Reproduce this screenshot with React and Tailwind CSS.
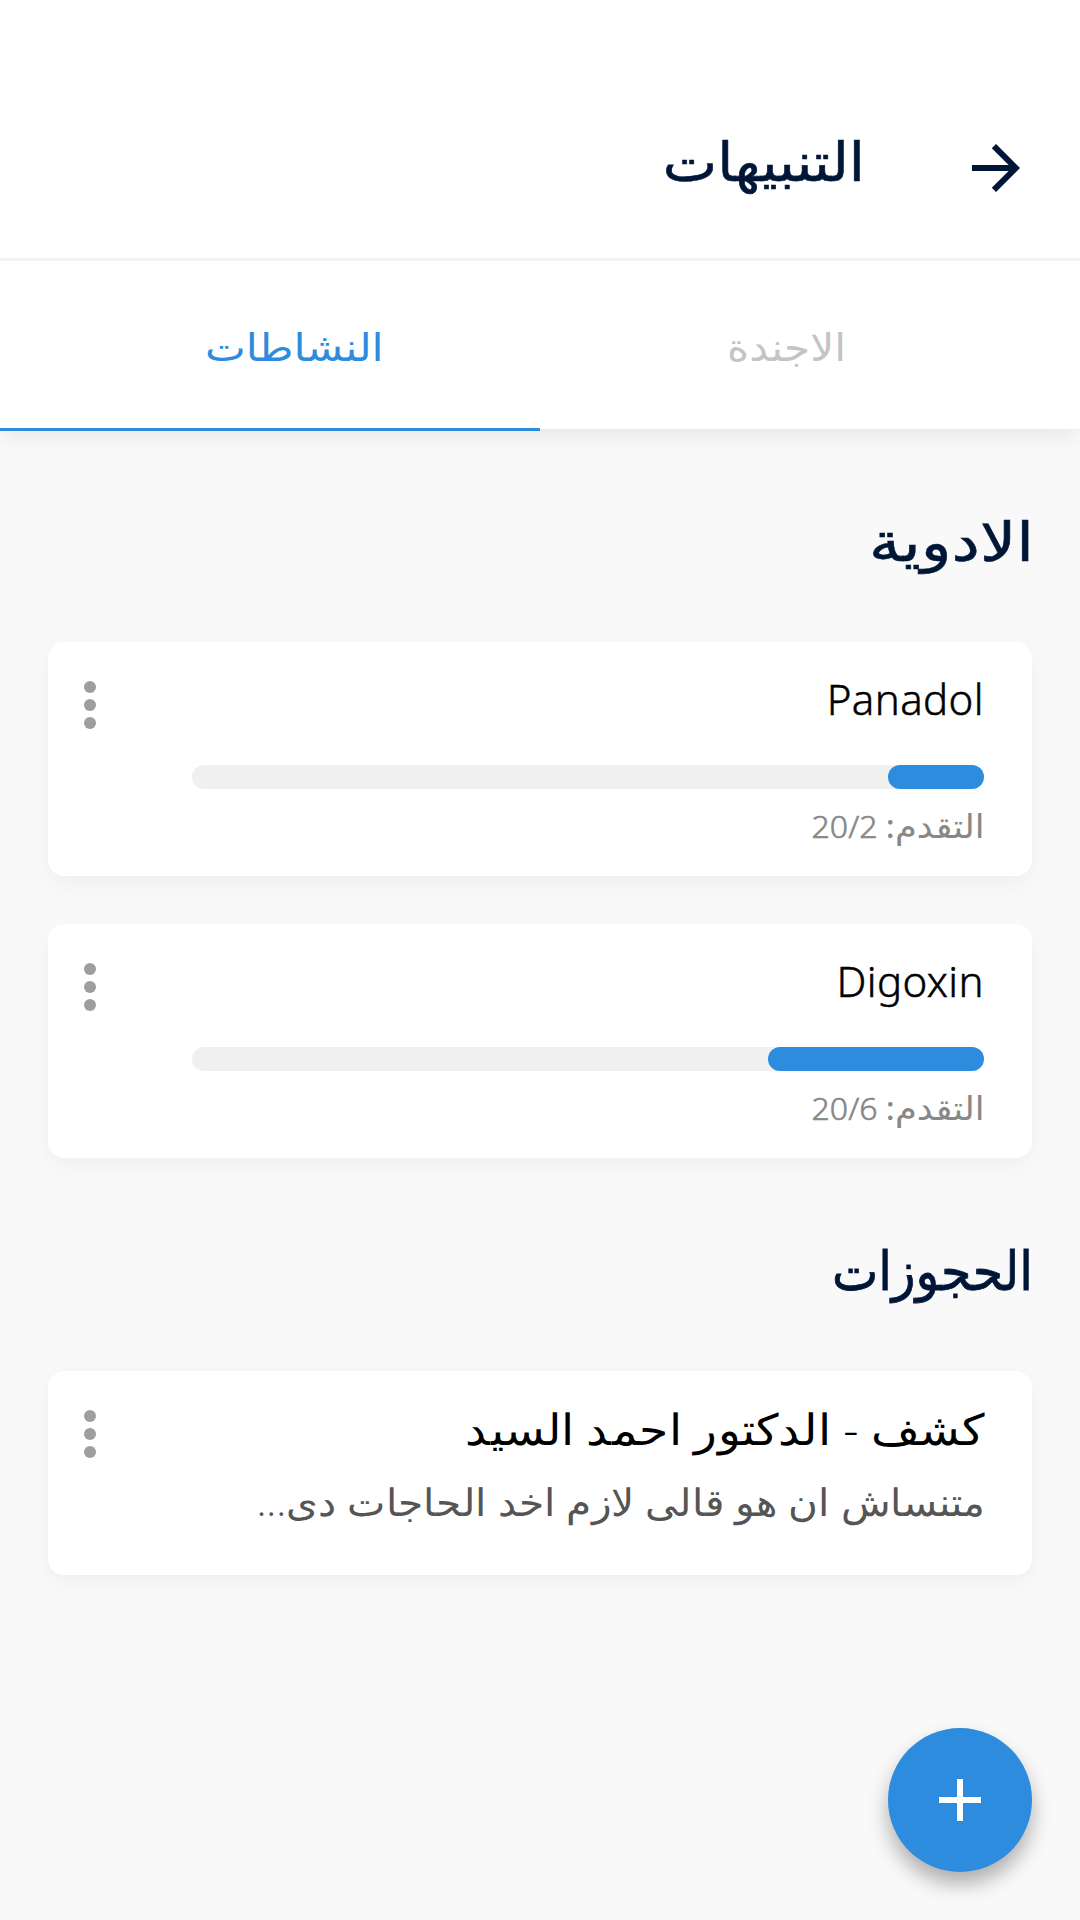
function Dots() {
  return (
    <div className="absolute left-9 top-[39px] flex flex-col gap-[6px]">
      <i className="size-3 rounded-full bg-[#9e9e9e]" />
      <i className="size-3 rounded-full bg-[#9e9e9e]" />
      <i className="size-3 rounded-full bg-[#9e9e9e]" />
    </div>
  );
}

function Medicine({ name, done, total }) {
  return (
    <article className="relative mb-12 flex h-[234px] flex-col rounded-2xl bg-white pr-12 pl-[144px] shadow-[0_8px_24px_rgba(0,0,0,0.045)]">
      <h3 className="mt-[27px] h-[60px] text-[42px] leading-[60px] font-light tracking-[0.4px] text-black [-webkit-text-stroke:0.5px_black]"><bdi>{name}</bdi></h3>
      <div className="mt-9 h-6 rounded-full bg-[#f0f0f0]">
        <div className="h-6 rounded-full bg-[#2d8cde]" style={{ width: `${36 + (done / total) * 600}px` }} />
      </div>
      <p className="mt-[17px] flex gap-[14px] text-[33px] leading-[40px] text-[#888]">
        <span className="origin-right scale-x-[1.07]">التقدم:</span>
        <bdi dir="ltr" className="text-[32px] font-light [-webkit-text-stroke:0.6px_#888]">{total}/{done}</bdi>
      </p>
      <Dots />
    </article>
  );
}

export default function App() {
  return (
    <main dir="rtl" className="flex h-[1920px] w-[1080px] flex-col overflow-hidden bg-[#f9f9f9] font-['Noto_Sans','DejaVu_Sans',sans-serif]">
      <header className="relative z-10 flex h-[261px] shrink-0 items-start border-b-[3px] border-[#f3f3f3] bg-white pt-[144px] pr-[60px]">
        <svg width="48" height="48" viewBox="0 0 48 48" fill="none" stroke="#001637" strokeWidth="6"><path d="M0 24H43M21.9 2.1L43.8 24L21.9 45.9" /></svg>
        <h1 className="-mt-[22px] mr-[107px] origin-right scale-x-[1.07] text-[54px] leading-[76px] text-[#001637] [-webkit-text-stroke:0.6px_#001637]">التنبيهات</h1>
      </header>
      <nav className="flex h-[168px] shrink-0 bg-white text-[38px] shadow-[0_9px_24px_-4px_rgba(0,0,0,0.09)]">
        <div className="flex w-1/2 items-center justify-center pt-[3px] pr-[47px] text-[#c4c4c4]"><span className="scale-x-[1.11]">الاجندة</span></div>
        <div className="-mb-[2px] flex w-1/2 items-center justify-center border-b-[3px] border-[#2d8cde] pt-[3px] pl-12 text-[#2d8cde]"><span className="scale-x-[1.14]">النشاطات</span></div>
      </nav>
      <section className="px-12">
        <h2 className="-mr-[2px] h-[213px] origin-right scale-x-[1.18] pt-[71px] text-[54px] leading-[80px] text-[#001637] [-webkit-text-stroke:0.6px_#001637]">الادوية</h2>
        <Medicine name="Panadol" done={2} total={20} />
        <Medicine name="Digoxin" done={6} total={20} />
        <h2 className="-mr-px h-[165px] origin-right scale-x-[0.91] pt-[23px] text-[54px] leading-[80px] text-[#001637] [-webkit-text-stroke:0.8px_#001637]">الحجوزات</h2>
        <article className="relative h-[204px] rounded-2xl bg-white px-12 pt-[22px] shadow-[0_8px_24px_rgba(0,0,0,0.045)]">
          <h3 className="origin-right scale-x-[1.1] text-[43px] leading-[72px] font-light text-black">كشف - الدكتور احمد السيد</h3>
          <p className="origin-right scale-x-[1.07] text-[38px] leading-[72px] font-light whitespace-nowrap text-[#555]">متنساش ان هو قالى لازم اخد الحاجات دى...</p>
          <Dots />
        </article>
      </section>
      <button aria-label="إضافة" className="mt-[153px] mr-12 flex size-36 shrink-0 items-center justify-center rounded-full bg-[#2d8cde] shadow-[0_12px_20px_rgba(0,0,0,0.3)]">
        <svg width="42" height="42" viewBox="0 0 42 42" stroke="white" strokeWidth="6"><path d="M0 21H42M21 0V42" /></svg>
      </button>
    </main>
  );
}
